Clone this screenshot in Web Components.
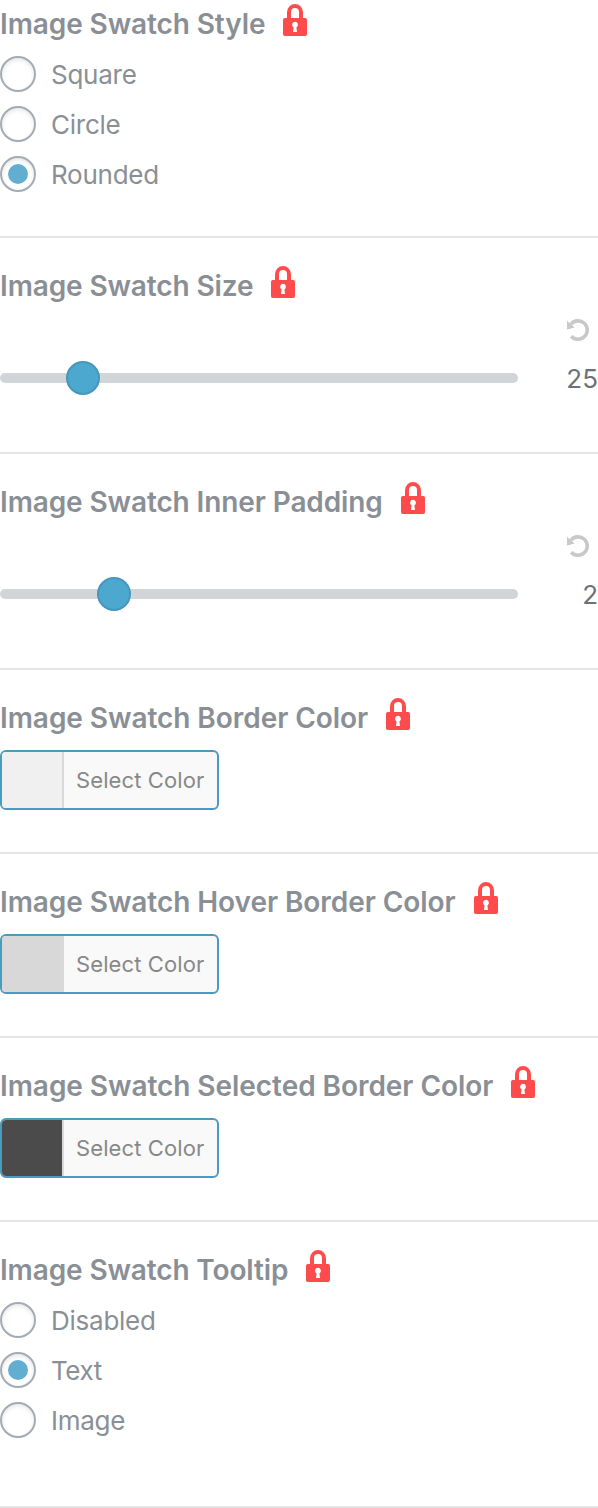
<!DOCTYPE html>
<html lang="en">
<head>
<meta charset="utf-8">
<title>Image Swatch Settings</title>
<style>
html,body{margin:0;background:#fff}
body{font-family:Inter,"Liberation Sans",sans-serif;color:#8a8f96}
</style>
</head>
<body>
<swatch-settings></swatch-settings>
<script>
class LockIcon extends HTMLElement{
  constructor(){super();this.attachShadow({mode:'open'}).innerHTML=`
  <style>:host{display:block;width:24px;height:32px}svg{display:block}</style>
  <svg width="24" height="32" viewBox="0 0 24 32"><path d="M6 15V8.200a6 6.200 0 0 1 12 0V15" fill="none" stroke="#ff4b4b" stroke-width="4"/><path fill="#ff4b4b" fill-rule="evenodd" d="M1.800 14H22.200A1.800 1.800 0 0 1 24 15.800V30.200A1.800 1.800 0 0 1 22.200 32H1.800A1.800 1.800 0 0 1 0 30.200V15.800A1.800 1.800 0 0 1 1.800 14ZM12 17.800a3 3 0 0 0-1.400 5.600L10 28h4l-.6-4.600A3 3 0 0 0 12 17.800Z"/></svg>`}
}
customElements.define('lock-icon',LockIcon);

class SettingSection extends HTMLElement{
  constructor(){super();this.attachShadow({mode:'open'}).innerHTML=`
  <style>
  :host{display:block;box-sizing:border-box;height:var(--h);padding-top:var(--top,30px);border-bottom:2px solid #e6e6e6}
  header{display:flex;align-items:flex-start;gap:18px;height:36px;margin-bottom:14px}
  h2{margin:0;font-size:28px;line-height:36px;font-weight:600;white-space:nowrap;letter-spacing:var(--head-ls,0)}
  lock-icon{margin-top:-2px}
  </style>
  <header><h2></h2><lock-icon></lock-icon></header><slot></slot>`}
  connectedCallback(){this.shadowRoot.querySelector('h2').textContent=this.getAttribute('label')}
}
customElements.define('setting-section',SettingSection);

class RadioOption extends HTMLElement{
  constructor(){super();this.attachShadow({mode:'open'}).innerHTML=`
  <style>
  :host{display:flex;align-items:center;gap:15px;height:36px;margin-bottom:14px;font-size:26px;line-height:36px}
  i{box-sizing:border-box;width:36px;height:36px;border:2px solid #a3acb4;border-radius:50%;display:grid;place-items:center;box-shadow:inset 0 2px 4px rgba(0,0,0,.1)}
  :host([checked]) i::after{content:"";width:20px;height:20px;border-radius:50%;background:#62aed1}
  span{letter-spacing:var(--ls,-.25px);padding-top:2px}
  </style><i></i><span><slot></slot></span>`}
}
customElements.define('radio-option',RadioOption);

class RangeSlider extends HTMLElement{
  constructor(){super();this.attachShadow({mode:'open'}).innerHTML=`
  <style>
  :host{display:grid;grid-template-columns:518px 1fr;grid-template-rows:24px 34px;row-gap:19px}
  svg{grid-column:2;display:block;justify-self:end;margin-right:8px}
  .track{height:10px;border-radius:5px;background:#d1d5d8;align-self:center;display:flex;align-items:center}
  .thumb{box-sizing:border-box;width:34px;height:34px;flex:none;margin-left:var(--at);border-radius:50%;background:#4da8d0;border:2px solid #4696bd}
  output{text-align:right;font-size:26px;line-height:36px;color:#6d7278}
  </style>
  <svg width="24" height="24" viewBox="0 0 24 24"><path d="M5 6.100A9.200 9.200 0 1 1 5.200 18.200" fill="none" stroke="#c8c8c8" stroke-width="3.600"/><path d="M1 2.700V11.600L8.600 9.400Z" fill="#c8c8c8"/></svg>
  <div class="track"><div class="thumb"></div></div><output></output>`}
  connectedCallback(){this.shadowRoot.querySelector('output').textContent=this.getAttribute('value')}
}
customElements.define('range-slider',RangeSlider);

class ColorButton extends HTMLElement{
  constructor(){super();this.attachShadow({mode:'open'}).innerHTML=`
  <style>
  :host{display:flex;box-sizing:border-box;width:219px;height:60px;border:2px solid #4b9abf;border-radius:6px;overflow:hidden;background:#f9f9f9;color:#888}
  i{width:60px;background:var(--c);border-right:2px solid #d9d9d9}
  span{font-size:22px;line-height:56px;padding-left:12px;white-space:nowrap;letter-spacing:.1px}
  </style><i></i><span><slot></slot></span>`}
}
customElements.define('color-button',ColorButton);

class SwatchSettings extends HTMLElement{
  constructor(){super();this.attachShadow({mode:'open'}).innerHTML=`
  <style>:host{display:block;width:598px;height:1508px;overflow:hidden}</style>
  <setting-section label="Image Swatch Style" style="--h:238px;--top:6px;--head-ls:-.1px"><radio-option>Square</radio-option><radio-option>Circle</radio-option><radio-option checked>Rounded</radio-option></setting-section>
  <setting-section label="Image Swatch Size" style="--h:216px;--head-ls:-.12px"><range-slider value="25" style="--at:66px"></range-slider></setting-section>
  <setting-section label="Image Swatch Inner Padding" style="--h:216px;--head-ls:-.11px"><range-slider value="2" style="--at:97px"></range-slider></setting-section>
  <setting-section label="Image Swatch Border Color" style="--h:184px;--head-ls:-.05px"><color-button style="--c:#f0f0f0">Select Color</color-button></setting-section>
  <setting-section label="Image Swatch Hover Border Color" style="--h:184px;--head-ls:-.06px"><color-button style="--c:#d8d8d8">Select Color</color-button></setting-section>
  <setting-section label="Image Swatch Selected Border Color" style="--h:184px;--head-ls:-.05px"><color-button style="--c:#4b4b4b">Select Color</color-button></setting-section>
  <setting-section label="Image Swatch Tooltip" style="--h:286px;--head-ls:-.13px"><radio-option>Disabled</radio-option><radio-option checked style="--ls:-.4px">Text</radio-option><radio-option>Image</radio-option></setting-section>`}
}
customElements.define('swatch-settings',SwatchSettings);
</script>
</body>
</html>
